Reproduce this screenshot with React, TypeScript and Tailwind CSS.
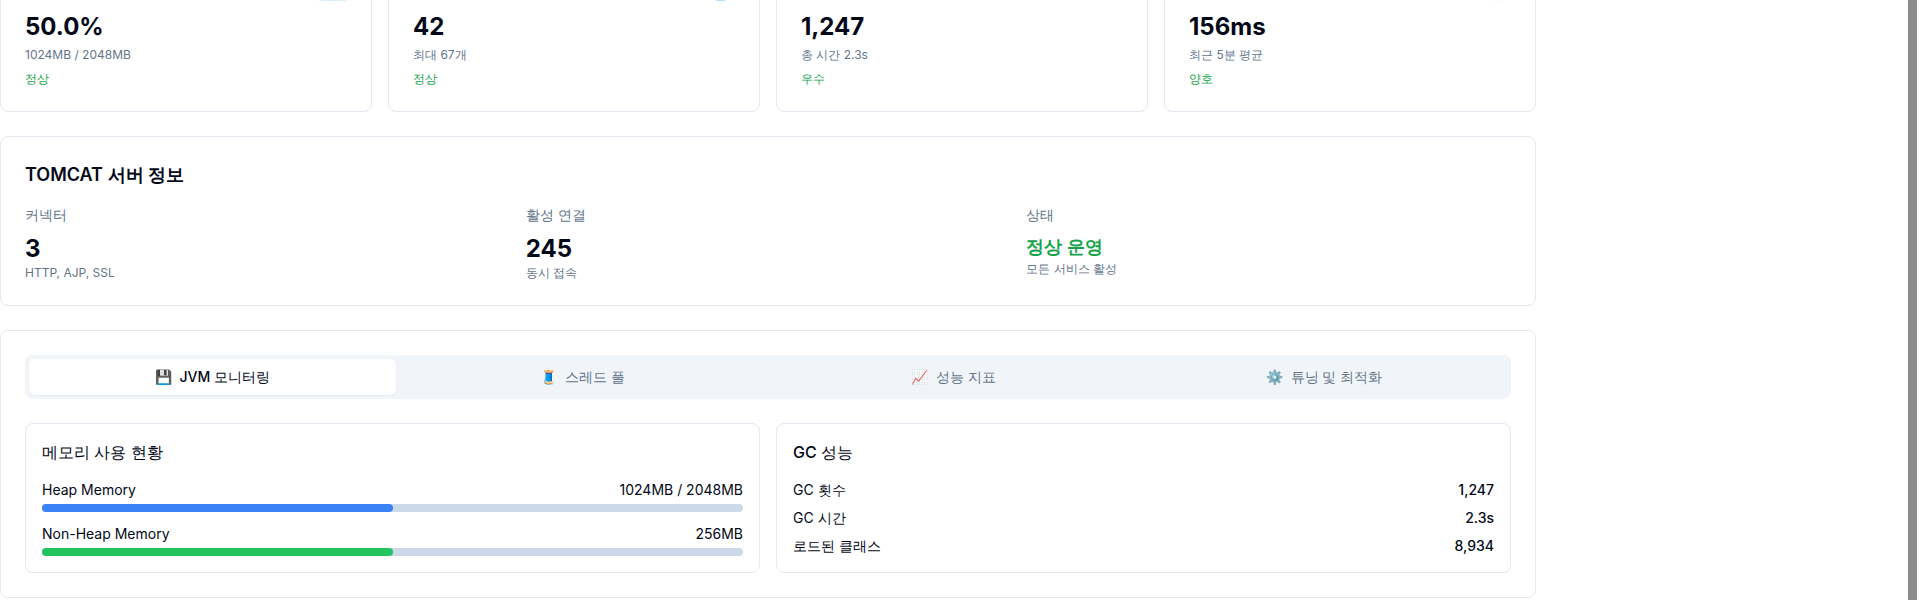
import React from "react";

type Stat = { mark: string; value: string; note: string; status: string };

const stats: Stat[] = [
  {
    mark: "w-[27px] bg-[linear-gradient(90deg,#eeeeee_0_4px,#d3effd_4px_23px,#eeeeee_23px)]",
    value: "50.0%",
    note: "1024MB / 2048MB",
    status: "정상",
  },
  { mark: "mr-[9px] w-[9px] rounded-b-full bg-[#b5dcfb]", value: "42", note: "최대 67개", status: "정상" },
  { mark: "w-0", value: "1,247", note: "총 시간 2.3s", status: "우수" },
  { mark: "mr-[8px] w-[8px] bg-[#fafafa]", value: "156ms", note: "최근 5분 평균", status: "양호" },
];

const tabs = [
  { icon: "💾", label: "JVM 모니터링" },
  { icon: "🧵", label: "스레드 풀" },
  { icon: "📈", label: "성능 지표" },
  { icon: "⚙️", label: "튜닝 및 최적화" },
];

const gcRows = [
  ["GC 횟수", "1,247"],
  ["GC 시간", "2.3s"],
  ["로드된 클래스", "8,934"],
];

function StatCard({ mark, value, note, status }: Stat) {
  return (
    <div className="rounded-lg border border-[#e2e8f0] bg-white p-6">
      <div className="flex h-[11px] justify-end pr-[1px]">
        <div className={`h-px ${mark}`} />
      </div>
      <div className="text-2xl font-bold">{value}</div>
      <p className="mt-1 text-xs text-[#64748b]">{note}</p>
      <div className="mt-2 text-xs text-[#16a34a]">{status}</div>
    </div>
  );
}

function Meter({ label, value, fill }: { label: string; value: string; fill: string }) {
  return (
    <div>
      <div className="mb-1 flex justify-between text-sm">
        <span>{label}</span>
        <span>{value}</span>
      </div>
      <div className="h-2 w-full rounded-full bg-[#cbd9e8]">
        <div className={`h-2 w-1/2 rounded-full ${fill}`} />
      </div>
    </div>
  );
}

export default function App() {
  return (
    <div className="flex h-[600px] w-full justify-between overflow-hidden bg-white font-['Inter',sans-serif] text-[#020817]">
      <main className="-mt-[25px] w-[1536px] shrink-0 space-y-6">
        <div className="grid grid-cols-4 gap-4">
          {stats.map((s) => (
            <StatCard key={s.value} {...s} />
          ))}
        </div>

        <section className="rounded-lg border border-[#e2e8f0] p-6">
          <h3 className="mb-4 text-lg font-semibold">TOMCAT 서버 정보</h3>
          <div className="grid grid-cols-3 gap-4">
            <div>
              <div className="mb-2 text-sm text-[#64748b]">커넥터</div>
              <div className="text-2xl font-bold">3</div>
              <div className="text-xs text-[#64748b]">HTTP, AJP, SSL</div>
            </div>
            <div>
              <div className="mb-2 text-sm text-[#64748b]">활성 연결</div>
              <div className="text-2xl font-bold">245</div>
              <div className="text-xs text-[#64748b]">동시 접속</div>
            </div>
            <div>
              <div className="mb-2 text-sm text-[#64748b]">상태</div>
              <div className="text-lg font-semibold text-[#16a34a]">정상 운영</div>
              <div className="text-xs text-[#64748b]">모든 서비스 활성</div>
            </div>
          </div>
        </section>

        <section className="rounded-lg border border-[#e2e8f0] p-6">
          <div className="mb-6 grid grid-cols-4 gap-1 rounded-lg bg-[#f1f5f9] p-1">
            {tabs.map((t, i) => (
              <button
                key={t.label}
                className={`flex h-9 items-center justify-center rounded-md text-sm font-medium ${
                  i === 0 ? "bg-white text-[#020817] shadow-[0_1px_2px_0_rgb(0_0_0/0.05)]" : "text-[#64748b]"
                }`}
              >
                <span className="mr-2">{t.icon}</span>
                {t.label}
              </button>
            ))}
          </div>
          <div className="grid grid-cols-2 gap-4">
            <div className="rounded-lg border border-[#e2e8f0] p-4">
              <h4 className="mb-4 font-medium">메모리 사용 현황</h4>
              <div className="space-y-3">
                <Meter label="Heap Memory" value="1024MB / 2048MB" fill="bg-[#3b82f6]" />
                <Meter label="Non-Heap Memory" value="256MB" fill="bg-[#22c55e]" />
              </div>
            </div>
            <div className="rounded-lg border border-[#e2e8f0] p-4">
              <h4 className="mb-4 font-medium">GC 성능</h4>
              <div className="space-y-2 text-sm">
                {gcRows.map(([k, v]) => (
                  <div key={k} className="flex justify-between">
                    <span>{k}</span>
                    <span className="font-medium">{v}</span>
                  </div>
                ))}
              </div>
            </div>
          </div>
        </section>
      </main>
      <div className="flex w-[15px] justify-center bg-[#fcfcfc]">
        <div className="w-[9px] bg-[#8b8b8b]" />
      </div>
    </div>
  );
}
